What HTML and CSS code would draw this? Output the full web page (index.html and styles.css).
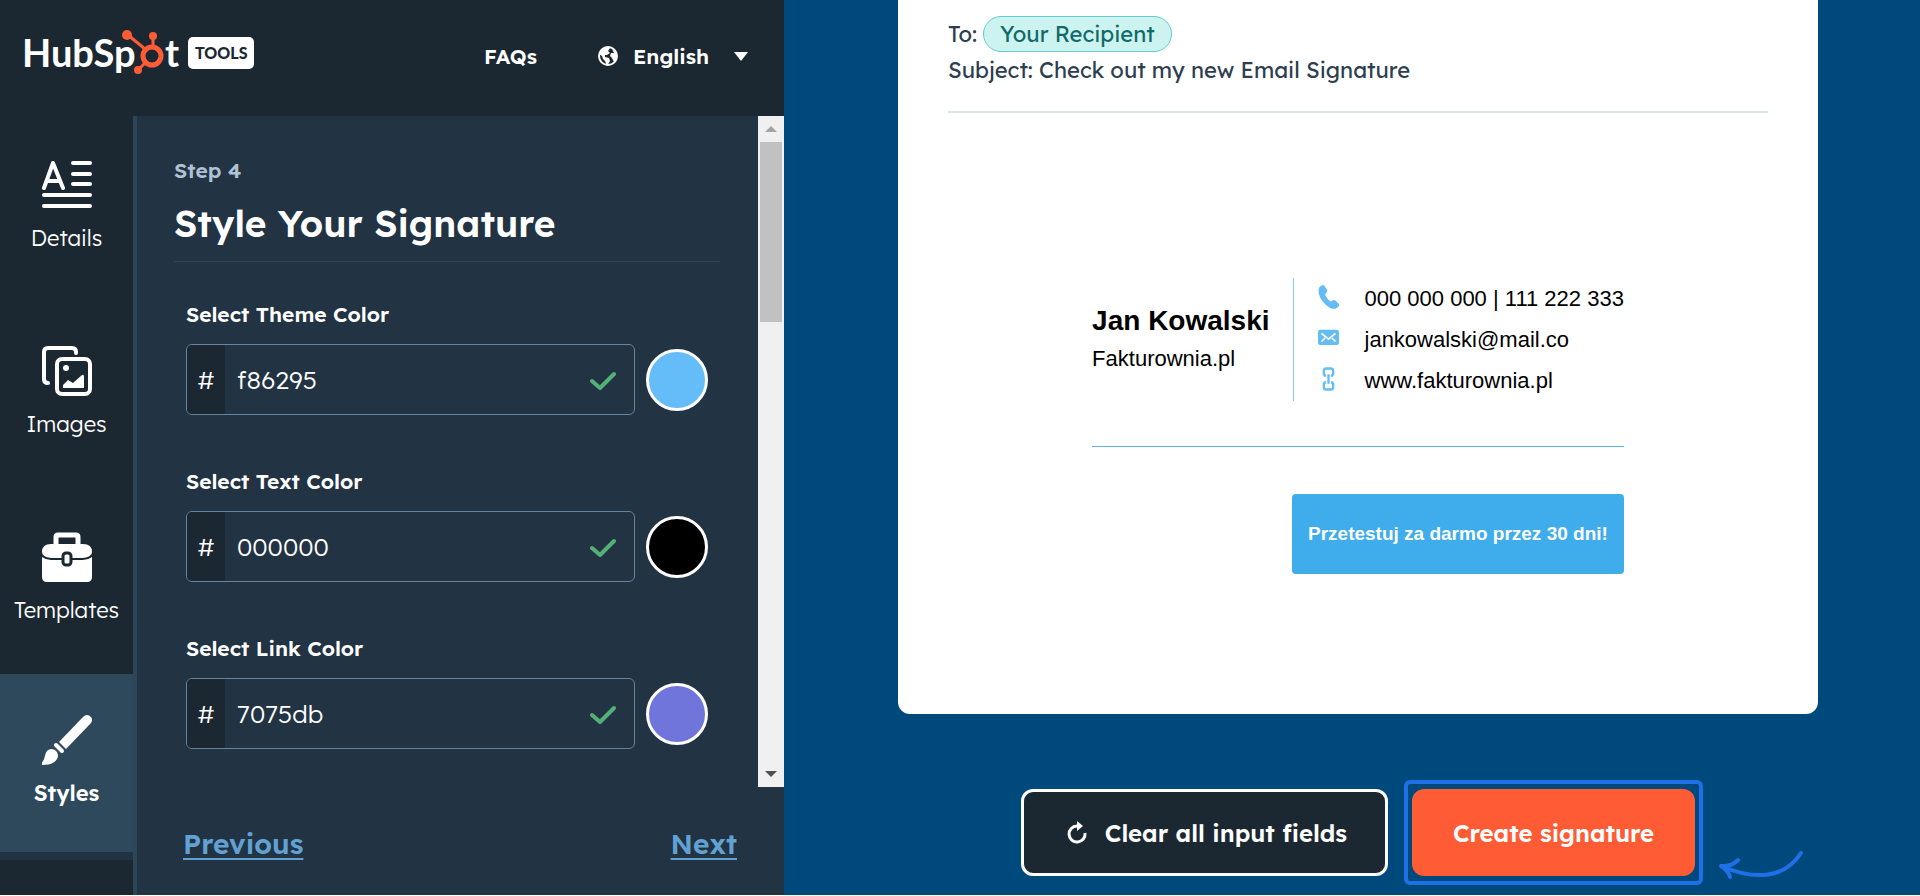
FILE: index.html
```html
<!DOCTYPE html>
<html lang="en">
<head>
    <meta charset="UTF-8">
    <meta name="viewport" content="width=device-width, initial-scale=1.0">
    <title>Email Signature Generator</title>
    <link rel="stylesheet" href="styles.css">
</head>
<body>
    <div class="app">
        <!-- Editor side -->
        <div class="editor">
            <header class="topbar">
                <a href="#" class="logo">
                    <svg width="154" height="50" viewBox="0 0 154 50">
                        <text class="logo-text" x="-3" y="39">HubSp</text>
                        <text class="logo-text" x="140" y="39">t</text>
                        <g class="sprocket">
                            <circle class="ring" cx="127" cy="28" r="9"/>
                            <path d="M103 7 L120 21 M128 8 V19 M120 35 L114 41"/>
                            <circle cx="102" cy="7" r="5"/>
                            <circle cx="128" cy="8" r="4"/>
                            <circle cx="113" cy="42" r="4"/>
                        </g>
                    </svg>
                    <span class="badge">TOOLS</span>
                </a>
                <nav class="top-links">
                    <a href="#">FAQs</a>
                    <div class="language">
                        <svg width="22" height="22" viewBox="0 0 22 22">
                            <circle cx="11" cy="11" r="9" fill="none" stroke="#fff" stroke-width="2"/>
                            <path d="M4 5 L9 2 L13 3 L11 6 L13 8 L10 10 L8 10 L8 12 L12 13 L13 16 L10 21 L8 16 L6 14 L5 11 L2 9 Z M15 4 L20 8 L20 15 L17 17 L15 13 L13 11 L14 8 L17 8 Z" fill="#fff"/>
                        </svg>
                        <select aria-label="Language">
                            <option>English</option>
                        </select>
                        <svg class="caret" width="14" height="9" viewBox="0 0 14 9"><path d="M0 0 H14 L7 9 Z" fill="#fff"/></svg>
                    </div>
                </nav>
            </header>

            <div class="workspace">
                <nav class="steps">
                    <a href="#" class="step">
                        <svg width="50" height="50" viewBox="0 0 50 50" class="stroke-icon">
                            <path d="M2 28 L11 3 L21 28 M6 21 H17 M31 3 H48 M31 14 H48 M31 24 H48 M2 35 H48 M2 46 H48"/>
                        </svg>
                        <span>Details</span>
                    </a>
                    <a href="#" class="step">
                        <svg width="50" height="50" viewBox="0 0 50 50" class="stroke-icon">
                            <path d="M34 7 V6 Q34 2 30 2 H6 Q2 2 2 6 V33 Q2 37 6 37"/>
                            <rect x="15" y="13" width="33" height="35" rx="5"/>
                            <circle cx="24" cy="22" r="3" class="solid"/>
                            <path class="solid" d="M21 42 V39 L26 34 L31 37 L40 29 Q42 28 42 31 V42 Z"/>
                        </svg>
                        <span>Images</span>
                    </a>
                    <a href="#" class="step">
                        <svg width="50" height="50" viewBox="0 0 50 50" fill="#fff">
                            <path d="M14 14 V5 Q14 3 16 3 H34 Q36 3 36 5 V14" fill="none" stroke="#fff" stroke-width="5"/>
                            <path d="M9 12 H41 Q50 12 50 20 Q50 25 41 26 H9 Q0 25 0 20 Q0 12 9 12 Z"/>
                            <path d="M0 25 Q4 28 9 28 H41 Q46 28 50 25 V45 Q50 50 45 50 H5 Q0 50 0 45 Z"/>
                            <rect x="21" y="21" width="8" height="12" rx="3" stroke="#1b2832" stroke-width="3"/>
                        </svg>
                        <span>Templates</span>
                    </a>
                    <a href="#" class="step active">
                        <svg width="50" height="50" viewBox="0 0 50 50" fill="#fff">
                            <path d="M45 0 A5 5 0 0 1 49 8 L24 34 L17 27 L41 2 Q43 0 45 0 Z"/>
                            <path d="M14 30 L20 36" stroke="#fff" stroke-width="4" stroke-linecap="round"/>
                            <path d="M0 50 Q-1 48 1 46 C4 42 2 35 9 34 C14 34 18 39 15 44 C12 49 6 50 0 50 Z"/>
                        </svg>
                        <span>Styles</span>
                    </a>
                </nav>

                <div class="panel">
                    <div class="scroll-area">
                        <form class="form">
                            <p class="step-count">Step 4</p>
                            <h1>Style Your Signature</h1>

                            <div class="field">
                                <label for="theme-color">Select Theme Color</label>
                                <div class="field-row">
                                    <div class="hex-box">
                                        <span class="hash">#</span>
                                        <input type="text" id="theme-color" value="f86295">
                                        <svg width="26" height="20" viewBox="0 0 26 20"><path d="M2 11 L10 18 L24 4"/></svg>
                                    </div>
                                    <button type="button" class="swatch theme" aria-label="Pick theme color"></button>
                                </div>
                            </div>

                            <div class="field">
                                <label for="text-color">Select Text Color</label>
                                <div class="field-row">
                                    <div class="hex-box">
                                        <span class="hash">#</span>
                                        <input type="text" id="text-color" value="000000">
                                        <svg width="26" height="20" viewBox="0 0 26 20"><path d="M2 11 L10 18 L24 4"/></svg>
                                    </div>
                                    <button type="button" class="swatch text" aria-label="Pick text color"></button>
                                </div>
                            </div>

                            <div class="field">
                                <label for="link-color">Select Link Color</label>
                                <div class="field-row">
                                    <div class="hex-box">
                                        <span class="hash">#</span>
                                        <input type="text" id="link-color" value="7075db">
                                        <svg width="26" height="20" viewBox="0 0 26 20"><path d="M2 11 L10 18 L24 4"/></svg>
                                    </div>
                                    <button type="button" class="swatch link" aria-label="Pick link color"></button>
                                </div>
                            </div>
                        </form>
                        <div class="scrollbar">
                            <button type="button" aria-label="Scroll up"><svg width="12" height="6" viewBox="0 0 12 6"><path d="M0 6 L6 0 L12 6 Z" fill="#a3a3a3"/></svg></button>
                            <div class="track"><div class="thumb"></div></div>
                            <button type="button" aria-label="Scroll down"><svg width="12" height="6" viewBox="0 0 12 6"><path d="M0 0 L6 6 L12 0 Z" fill="#505050"/></svg></button>
                        </div>
                    </div>
                    <div class="pager">
                        <a href="#">Previous</a>
                        <a href="#">Next</a>
                    </div>
                </div>
            </div>
        </div>

        <!-- Preview side -->
        <main class="preview">
            <section class="mail">
                <div class="mail-head">
                    <p class="to">To: <span class="pill">Your Recipient</span></p>
                    <p>Subject: Check out my new Email Signature</p>
                </div>
                <div class="signature">
                    <div class="person">
                        <h2>Jan Kowalski</h2>
                        <p>Fakturownia.pl</p>
                    </div>
                    <ul class="contact">
                        <li>
                            <svg width="21" height="26" viewBox="0 0 18 22"><path d="M1 3 Q3 0 5 1 L8 5 Q8 7 6 9 Q8 13 11 15 Q13 13 15 14 L18 17 Q19 19 15 21 Q10 22 5 16 Q-1 9 1 3 Z" fill="#64bcf5"/></svg>
                            <span>000 000 000 | 111 222 333</span>
                        </li>
                        <li>
                            <svg width="21" height="26" viewBox="0 0 18 22"><rect y="4" width="18" height="13" rx="2" fill="#64bcf5"/><path d="M3 7 L9 12 L15 7 M3 14 L6 11 M15 14 L12 11" fill="none" stroke="#fff" stroke-width="1.5"/></svg>
                            <span>jankowalski@mail.co</span>
                        </li>
                        <li>
                            <svg width="21" height="26" viewBox="0 0 18 22" fill="none" stroke="#64bcf5" stroke-width="2"><path d="M5 8 V4 Q5 2 7 2 H11 Q13 2 13 4 V8 M5 14 V18 Q5 20 7 20 H11 Q13 20 13 18 V14 M5 8 H7 M5 14 H7 M13 8 H11 M13 14 H11 M9 7 V15"/></svg>
                            <span>www.fakturownia.pl</span>
                        </li>
                    </ul>
                    <div class="cta-row">
                        <a href="#" class="cta">Przetestuj za darmo przez 30 dni!</a>
                    </div>
                </div>
            </section>

            <div class="actions">
                <button type="button" class="btn clear">
                    <svg width="20" height="24" viewBox="0 0 20 24"><path d="M18 12 A8 8 0 1 1 10 5" fill="none" stroke="#fff" stroke-width="3"/><path d="M10 0 L16 5 L10 10 Z" fill="#fff"/></svg>
                    Clear all input fields
                </button>
                <div class="highlight">
                    <button type="button" class="btn create">Create signature</button>
                    <svg class="arrow" width="86" height="32" viewBox="0 0 86 32"><path d="M84 4 C68 29 39 32 4 17 M4 17 Q14 18 21 11 M4 17 Q11 21 13 28"/></svg>
                </div>
            </div>
        </main>
    </div>
</body>
</html>
```

FILE: styles.css
```css
* {
    box-sizing: border-box;
}
body {
    margin: 0;
    background-color: #fff;
    color: #fff;
    font-family: Lexend, Inter, sans-serif;
    font-size: 21px;
}
a {
    color: inherit;
    text-decoration: none;
}
button, input, select {
    font: inherit;
    color: inherit;
}
p, h1, h2, ul {
    margin: 0;
    padding: 0;
}

.app {
    display: grid;
    grid-template-columns: 49fr 71fr;
    height: calc(100vh - 1px);
    overflow: hidden;
}

/* Editor side */
.editor {
    display: flex;
    flex-direction: column;
    min-width: 0;
    background-color: #1b2832;
}
.topbar {
    display: flex;
    align-items: center;
    justify-content: space-between;
    height: 116px;
    padding: 0 36px 4px 25px;
}
.logo {
    display: flex;
    align-items: center;
    gap: 9px;
    margin-bottom: 6px;
}
.logo svg {
    overflow: visible;
}
.logo-text {
    font-family: Lato, sans-serif;
    font-size: 38px;
    font-weight: 700;
    fill: #fff;
}
.sprocket {
    fill: #ff5c35;
    stroke: #ff5c35;
}
.sprocket circle {
    stroke: none;
}
.sprocket path {
    stroke-width: 3;
}
.sprocket .ring {
    fill: none;
    stroke: #ff5c35;
    stroke-width: 5;
}
.badge {
    padding: 0 7px;
    border-radius: 5px;
    background-color: #fff;
    color: #1b2832;
    font-family: Lato, sans-serif;
    font-size: 16px;
    font-weight: 900;
    line-height: 32px;
}
.top-links {
    display: flex;
    align-items: center;
    gap: 60px;
    font-weight: 600;
}
.language {
    position: relative;
    display: flex;
    align-items: center;
    gap: 14px;
}
.language select {
    padding: 0 38px 0 0;
    border: 0;
    background: none;
    appearance: none;
}
.language .caret {
    position: absolute;
    right: 0;
    pointer-events: none;
}
.workspace {
    display: flex;
    flex: 1;
    min-height: 0;
}

/* Step navigation */
.steps {
    width: 133px;
    overflow: hidden;
    flex-shrink: 0;
}
.step {
    display: flex;
    flex-direction: column;
    align-items: center;
    gap: 12px;
    height: 186px;
    padding-top: 44px;
    border-bottom: 8px solid transparent;
    font-size: 22px;
    font-weight: 300;
    line-height: 32px;
}
.step.active {
    padding-top: 41px;
    border-color: #213243;
    background-color: #2e485c;
    font-weight: 600;
    background-clip: padding-box;
}
.stroke-icon {
    fill: none;
    stroke: #fff;
    stroke-width: 4;
    stroke-linecap: round;
    stroke-linejoin: round;
}
.stroke-icon .solid {
    fill: #fff;
    stroke: none;
}

/* Form panel */
.panel {
    display: flex;
    flex-direction: column;
    flex: 1;
    min-width: 0;
    border-left: 4px solid #2c4558;
    background-color: #223344;
}
.scroll-area {
    display: flex;
    flex: 1;
    min-height: 0;
}
.form {
    flex: 1;
    overflow: hidden;
    padding: 38px 38px 0 37px;
}
.step-count {
    color: #b0c1d4;
    font-weight: 600;
    line-height: 32px;
}
.form h1 {
    padding: 12px 0 13px;
    border-bottom: 1px solid #2e475d;
    font-size: 37px;
    font-weight: 600;
    line-height: 50px;
}
.field {
    padding: 36px 12px 0;
    height: 167px;
}
.field label {
    display: block;
    margin-bottom: 14px;
    font-weight: 600;
    line-height: 32px;
}
.field-row {
    display: flex;
    align-items: center;
    gap: 11px;
}
.hex-box {
    display: flex;
    align-items: center;
    flex: 1;
    height: 71px;
    padding-right: 18px;
    border: 1px solid #6584a0;
    border-radius: 6px;
    overflow: hidden;
    font-size: 25px;
    font-weight: 300;
}
.hash {
    width: 38px;
    background-color: #1b2832;
    line-height: 69px;
    text-align: center;
}
.hex-box input {
    flex: 1;
    min-width: 0;
    padding: 0 12px;
    border: 0;
    background: none;
}
.hex-box path {
    fill: none;
    stroke: #55b076;
    stroke-width: 4;
    stroke-linecap: round;
    stroke-linejoin: round;
}
.swatch {
    width: 62px;
    height: 62px;
    border: 3px solid #fff;
    border-radius: 50%;
}
.swatch.theme {
    background-color: #64bcf8;
}
.swatch.text {
    background-color: #000;
}
.swatch.link {
    background-color: #7075db;
}
.scrollbar {
    display: flex;
    flex-direction: column;
    width: 26px;
    background-color: #f0f0f0;
}
.scrollbar button {
    display: flex;
    align-items: center;
    justify-content: center;
    height: 26px;
    padding: 0;
    border: 0;
    background: none;
}
.track {
    flex: 1;
    padding: 0 2px;
}
.thumb {
    height: 29%;
    background-color: #c1c1c1;
}
.pager {
    display: flex;
    align-items: center;
    justify-content: space-between;
    height: 108px;
    padding: 4px 47px 0 46px;
    color: #62a2d3;
    font-size: 28px;
    font-weight: 600;
}
.pager a {
    text-decoration: underline;
    text-decoration-thickness: 2px;
    text-underline-offset: 4px;
}

/* Preview side */
.preview {
    min-width: 0;
    padding: 0 102px 0 114px;
    background-color: #00497d;
}
.mail {
    padding: 16px 50px 140px;
    border-radius: 0 0 12px 12px;
    background-color: #fff;
    color: #2d3e50;
    font-size: 22px;
}
.mail-head {
    padding-bottom: 23px;
    border-bottom: 2px solid #dbe5ee;
    font-weight: 400;
    line-height: 36px;
}
.to {
    display: flex;
    align-items: center;
    gap: 6px;
    height: 36px;
}
.pill {
    padding: 0 16px;
    border: 1px solid #5fcdcc;
    border-radius: 18px;
    background-color: #cdf3f1;
    color: #106b68;
    line-height: 34px;
}
.signature {
    display: grid;
    grid-template-columns: auto auto;
    justify-content: center;
    margin-top: 165px;
    color: #000;
    font-family: "Liberation Sans", Arial, sans-serif;
}
.person {
    align-self: center;
    padding-right: 23px;
    line-height: 32px;
}
.person h2 {
    margin-bottom: 6px;
    font-size: 28px;
}
.contact {
    padding-left: 24px;
    border-left: 1px solid #8ccdf5;
    list-style: none;
}
.contact li {
    display: flex;
    gap: 26px;
    line-height: 41px;
}
.contact svg {
    margin-top: 6px;
}
.cta-row {
    display: flex;
    justify-content: flex-end;
    grid-column: 1 / 3;
    margin-top: 45px;
    padding-top: 47px;
    border-top: 1px solid #60b0e4;
}
.cta {
    padding: 0 16px;
    border-radius: 4px;
    background-color: #3faceb;
    color: #fff;
    font-size: 19px;
    font-weight: 700;
    line-height: 80px;
}

/* Buttons under the mail */
.actions {
    display: flex;
    align-items: center;
    justify-content: center;
    gap: 16px;
    margin-top: 66px;
    padding-left: 8px;
}
.btn {
    display: flex;
    align-items: center;
    justify-content: center;
    gap: 18px;
    height: 87px;
    border-radius: 12px;
    font-size: 24px;
    font-weight: 600;
    white-space: nowrap;
}
.btn.clear {
    padding: 0 38px 0 43px;
    border: 3px solid #fff;
    background-color: #1b2832;
}
.highlight {
    position: relative;
    padding: 5px 4px;
    border: 4px solid #1f70e6;
    border-radius: 6px;
}
.btn.create {
    padding: 0 41px;
    border: 0;
    background-color: #ff5c35;
}
.arrow {
    position: absolute;
    left: 309px;
    bottom: 0;
    fill: none;
    stroke: #1f70e6;
    stroke-width: 4;
    stroke-linecap: round;
}
```
